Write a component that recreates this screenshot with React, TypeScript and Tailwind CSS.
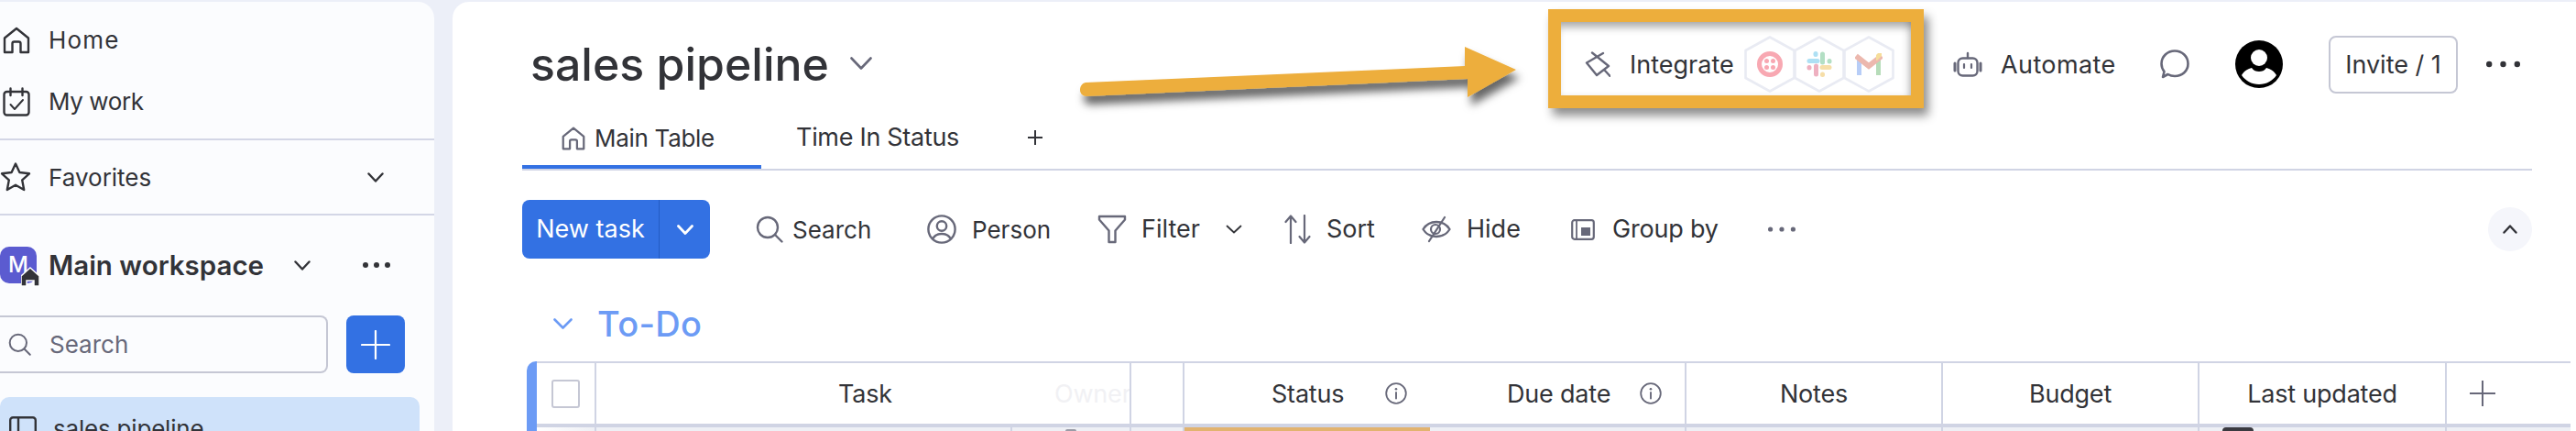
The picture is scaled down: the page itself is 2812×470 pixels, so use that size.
import React from "react";

const S = "#676879";
const D = "#323338";

function Dots({ c = D, r = 3.2, w = 37 }: { c?: string; r?: number; w?: number }) {
  return (
    <svg width={w} height="10" viewBox={`0 0 ${w} 10`} className="block">
      <circle cx={r} cy="5" r={r} fill={c} />
      <circle cx={w / 2} cy="5" r={r} fill={c} />
      <circle cx={w - r} cy="5" r={r} fill={c} />
    </svg>
  );
}

function Chev({ w = 22, h = 12, c = D, sw = 2.4, up = false }: { w?: number; h?: number; c?: string; sw?: number; up?: boolean }) {
  return (
    <svg width={w} height={h} viewBox={`0 0 ${w} ${h}`} className="block" fill="none">
      <path d={up ? `M1.5 ${h - 1.5}L${w / 2} 1.5L${w - 1.5} ${h - 1.5}` : `M1.5 1.5L${w / 2} ${h - 1.5}L${w - 1.5} 1.5`} stroke={c} strokeWidth={sw} strokeLinecap="round" strokeLinejoin="round" />
    </svg>
  );
}

function HomeIcon({ s = 30, c = D, sw = 2.4 }: { s?: number; c?: string; sw?: number }) {
  return (
    <svg width={s} height={s} viewBox="0 0 30 30" fill="none" className="block shrink-0">
      <path d="M2 12.5L15 2L28 12.5V28H19.5V18.5C19.5 17.4 18.6 16.5 17.5 16.5H12.5C11.4 16.5 10.5 17.4 10.5 18.5V28H2V12.5Z" stroke={c} strokeWidth={sw} strokeLinejoin="round" />
    </svg>
  );
}

function SearchIcon({ s = 30, c = S, sw = 2.4 }: { s?: number; c?: string; sw?: number }) {
  return (
    <svg width={s} height={s} viewBox="0 0 30 30" fill="none" className="block">
      <circle cx="13" cy="13" r="11" stroke={c} strokeWidth={sw} />
      <path d="M21 21L28.5 28.5" stroke={c} strokeWidth={sw} strokeLinecap="round" />
    </svg>
  );
}

function InfoIcon() {
  return (
    <svg width="24" height="24" viewBox="0 0 24 24" fill="none" className="block shrink-0">
      <circle cx="12" cy="12" r="10.8" stroke={S} strokeWidth="1.8" />
      <circle cx="12" cy="7.2" r="1.3" fill={S} />
      <path d="M12 11V17.5" stroke={S} strokeWidth="1.9" strokeLinecap="round" />
    </svg>
  );
}

function Hex({ children }: { children: React.ReactNode }) {
  return (
    <div className="relative flex h-[62px] w-[54px] shrink-0 items-center justify-center">
      <svg width="56" height="62" viewBox="0 0 56 62" fill="none" className="absolute left-[-1px] top-0">
        <path d="M28 1.5L54.5 16V46L28 60.5L1.5 46V16L28 1.5Z" stroke="#e9ebf3" strokeWidth="2.6" strokeLinejoin="round" />
      </svg>
      <div className="relative">{children}</div>
    </div>
  );
}

export default function App() {
  const font = "font-['Inter','Liberation_Sans',sans-serif]";
  return (
    <div className={`flex h-[470px] w-[2812px] gap-[20px] overflow-hidden bg-[#eceff8] pt-[2px] text-[#323338] ${font}`}>
      {/* Sidebar */}
      <aside className="flex h-[468px] w-[474px] shrink-0 flex-col overflow-hidden rounded-tr-[18px] bg-[#fbfcfe] pt-[8px]">
        <div className="flex h-[67px] shrink-0 items-center pl-[3px]">
          <HomeIcon />
          <span className="ml-[20px] text-[26px] tracking-[1.2px]">Home</span>
        </div>
        <div className="flex h-[67px] shrink-0 items-center pl-[3px]">
          <svg width="30" height="32" viewBox="0 0 30 32" fill="none" className="block">
            <rect x="1.5" y="5" width="27" height="25.5" rx="3" stroke={D} strokeWidth="2.4" />
            <path d="M8.5 1.5V9M21.5 1.5V9" stroke={D} strokeWidth="2.4" strokeLinecap="round" />
            <path d="M8.5 19L13 24L22 14" stroke={D} strokeWidth="2" strokeLinecap="round" strokeLinejoin="round" />
          </svg>
          <span className="ml-[20px] text-[26px] tracking-[-0.4px]">My work</span>
        </div>
        <div className="mt-[7px] h-[2px] shrink-0 bg-[#d3d6e6]" />
        <div className="flex h-[80px] shrink-0 items-center">
          <svg width="34" height="34" viewBox="0 0 34 34" fill="none" className="block shrink-0">
            <path d="M17 2.5L21.4 12L32 13.3L24.2 20.4L26.2 31L17 25.8L7.8 31L9.8 20.4L2 13.3L12.6 12L17 2.5Z" stroke={D} strokeWidth="2.4" strokeLinejoin="round" />
          </svg>
          <span className="ml-[19px] text-[26px]">Favorites</span>
          <div className="ml-auto mr-[55px]"><Chev w={18} h={11} /></div>
        </div>
        <div className="h-[2px] shrink-0 bg-[#d3d6e6]" />
        <div className="mt-[31px] flex h-[46px] shrink-0 items-center">
          <div className="relative h-[40px] w-[40px] shrink-0">
            <div className="flex h-[40px] w-[40px] items-center justify-center rounded-[10px] bg-[#5b5bd0] text-[24px] font-medium text-white">M</div>
            <svg width="20" height="22" viewBox="0 0 20 22" className="absolute left-[23px] top-[22px]">
              <path d="M10 1L20 10V21H14V15H6V21H0V10L10 1Z" fill={D} stroke="#fff" strokeWidth="1.5" />
            </svg>
          </div>
          <span className="ml-[13px] whitespace-nowrap text-[29.5px] font-semibold">Main workspace</span>
          <div className="ml-[33px] shrink-0"><Chev w={18} h={11} /></div>
          <div className="ml-[57px] shrink-0"><Dots w={30} r={3} /></div>
        </div>
        <div className="mt-[32px] flex h-[63px] shrink-0">
          <div className="flex w-[358px] items-center rounded-r-[8px] border-y-2 border-r-2 border-[#c5c7d4] pl-[9px]">
            <SearchIcon s={25} />
            <span className="ml-[20px] text-[26px] text-[#676879]">Search</span>
          </div>
          <div className="ml-[20px] flex h-[63px] w-[64px] items-center justify-center rounded-[8px] bg-[#3371e3]">
            <svg width="32" height="32" viewBox="0 0 32 32"><path d="M16 1V31M1 16H31" stroke="#fff" strokeWidth="2.2" strokeLinecap="round" /></svg>
          </div>
        </div>
        <div className="mt-[26px] flex h-[60px] w-[458px] shrink-0 items-start rounded-[10px] bg-[#cfe2fa] pl-[10px] pt-[21px]">
          <svg width="30" height="30" viewBox="0 0 30 30" fill="none" className="block shrink-0">
            <rect x="1.2" y="1.2" width="27.6" height="27.6" rx="3" stroke={D} strokeWidth="2.4" />
            <path d="M10 1V29" stroke={D} strokeWidth="2.4" />
          </svg>
          <span className="ml-[18px] mt-[-1px] text-[26px] leading-[30px] tracking-[-0.2px]">sales pipeline</span>
        </div>
      </aside>

      {/* Main */}
      <main className="relative flex h-[468px] flex-1 flex-col rounded-tl-[18px] bg-white">
        <header className="flex h-[136px] shrink-0 items-center pl-[86px]">
          <div className="flex w-[1150px] shrink-0 items-center">
            <h1 className="ml-[-1px] text-[50px] font-medium leading-none">sales pipeline</h1>
            <div className="ml-[23px] mt-[-2px]"><Chev w={24} h={14} c={S} sw={2.6} /></div>
          </div>
          <svg width="28" height="28" viewBox="0 0 28 28" fill="none" className="block shrink-0">
            <path d="M8 1.5L26 16L13 26L2 12.5L20 2M22 21L27.5 27" stroke={S} strokeWidth="2.4" strokeLinecap="round" strokeLinejoin="round" />
          </svg>
          <span className="ml-[21px] mt-[2px] w-[126px] shrink-0 text-[27px]">Integrate</span>
          <Hex>
            <svg width="28" height="28" viewBox="0 0 28 28">
              <circle cx="14" cy="14" r="11.5" fill="none" stroke="#f8a8b2" strokeWidth="5" />
              <circle cx="10.5" cy="10.5" r="2.5" fill="#f8a8b2" />
              <circle cx="17.5" cy="10.5" r="2.5" fill="#f8a8b2" />
              <circle cx="10.5" cy="17.5" r="2.5" fill="#f8a8b2" />
              <circle cx="17.5" cy="17.5" r="2.5" fill="#f8a8b2" />
            </svg>
          </Hex>
          <Hex>
            <svg width="28" height="28" viewBox="0 0 28 28" fill="none" strokeWidth="5" strokeLinecap="round">
              <path d="M3 10.5H12" stroke="#aee0f4" />
              <path d="M10 2.5V3.5" stroke="#aee0f4" />
              <path d="M17.5 3V12" stroke="#b3dfc4" />
              <path d="M25 10.5V11" stroke="#b3dfc4" />
              <path d="M17 17.5H25" stroke="#f6dea8" />
              <path d="M17.5 25V25.5" stroke="#f6dea8" />
              <path d="M10.5 16V25" stroke="#eeb0c0" />
              <path d="M3 17.5V18" stroke="#eeb0c0" />
            </svg>
          </Hex>
          <Hex>
            <svg width="30" height="26" viewBox="0 0 30 26" fill="none">
              <path d="M2 4V25H7V8L2 4Z" fill="#b7cdf7" />
              <path d="M23 8V25H28V4L23 8Z" fill="#b6dcb9" />
              <path d="M1 4L15 15L29 4" stroke="#ecb8ae" strokeWidth="6" />
              <path d="M24 9L29 4V1H25L23 3V9Z" fill="#f6dd9a" />
            </svg>
          </Hex>
          <svg width="32" height="28" viewBox="0 0 32 28" fill="none" className="ml-[65px] block shrink-0">
            <rect x="5.5" y="7.5" width="21" height="19" rx="5" stroke={S} strokeWidth="2.4" />
            <path d="M16 2V7" stroke={S} strokeWidth="2.4" strokeLinecap="round" />
            <path d="M12 14V18M20 14V18" stroke={S} strokeWidth="2.2" strokeLinecap="round" />
            <path d="M2 13V21M30 13V21" stroke={S} strokeWidth="3" strokeLinecap="round" />
          </svg>
          <span className="ml-[20px] mt-[2px] w-[174px] shrink-0 text-[27px] tracking-[0.4px]">Automate</span>
          <svg width="32" height="32" viewBox="0 0 32 32" fill="none" className="block shrink-0">
            <path d="M3 30L4.5 24C2.5 21.5 1.5 18.5 1.5 15.5C1.5 7.5 8 1.5 16 1.5C24 1.5 30.5 7.5 30.5 15.5C30.5 23.5 24 29 16 29C13 29 10.5 28.2 8.5 27L3 30Z" stroke={S} strokeWidth="2.6" strokeLinejoin="round" />
          </svg>
          <svg width="52" height="52" viewBox="0 0 52 52" className="ml-[50px] block shrink-0">
            <circle cx="26" cy="26" r="26" fill="#000" />
            <circle cx="26" cy="19" r="9" fill="#fff" />
            <path d="M7 38C10 33 14 31 18 30C20 33 23 34 26 34C29 34 32 33 34 30C38 31 42 33 45 38C41 44 34 48 26 48C18 48 11 44 7 38Z" fill="#fff" />
          </svg>
          <div className="ml-[50px] flex h-[63px] w-[141px] shrink-0 items-center justify-center rounded-[8px] border-2 border-[#c5c7d4] text-[27px]"><span className="mt-[2px]">Invite / 1</span></div>
          <div className="ml-[31px] shrink-0"><Dots /></div>
        </header>

        {/* Tabs */}
        <div className="ml-[76px] flex h-[48px] w-[2194px] shrink-0 items-start border-b-2 border-[#d0d4e4]">
          <div className="flex h-[46px] w-[261px] shrink-0 items-start border-b-4 border-[#3371e3] pl-[43px]">
            <HomeIcon s={26} c={S} sw={2.6} />
            <span className="ml-[10px] text-[26px] leading-[25px] tracking-[-0.3px]">Main Table</span>
          </div>
          <span className="ml-[38px] text-[27px] leading-[23px] tracking-[-0.3px]">Time In Status</span>
          <svg width="16" height="16" viewBox="0 0 16 16" className="ml-[75px] mt-[4px] block"><path d="M8 0V16M0 8H16" stroke={D} strokeWidth="2" /></svg>
        </div>

        {/* Toolbar */}
        <div className="ml-[76px] mt-[32px] flex h-[64px] w-[2194px] shrink-0 items-center">
          <div className="flex h-[64px] w-[205px] shrink-0 rounded-[8px] bg-[#3371e3] text-white">
            <div className="flex w-[150px] items-center justify-center border-r border-[#235cc4] text-[27px]">New task</div>
            <div className="flex flex-1 items-center justify-center"><Chev w={18} h={11} c="#fff" sw={2.8} /></div>
          </div>
          <div className="ml-[50px]"><SearchIcon /></div>
          <span className="ml-[10px] w-[147px] shrink-0 text-[26px]">Search</span>
          <svg width="32" height="32" viewBox="0 0 32 32" fill="none" className="block shrink-0">
            <circle cx="16" cy="16" r="14.6" stroke={S} strokeWidth="2.4" />
            <circle cx="16" cy="12.5" r="5.2" stroke={S} strokeWidth="2.4" />
            <path d="M6.5 26C8.5 22.5 12 21 16 21C20 21 23.5 22.5 25.5 26" stroke={S} strokeWidth="2.4" />
          </svg>
          <span className="ml-[17px] w-[137px] shrink-0 text-[26px]">Person</span>
          <svg width="32" height="32" viewBox="0 0 32 32" fill="none" className="block shrink-0">
            <path d="M2 2H30V5.5L19.5 17.5V30H12.5V17.5L2 5.5V2Z" stroke={S} strokeWidth="2.4" strokeLinejoin="round" />
          </svg>
          <span className="ml-[16px] w-[92px] shrink-0 text-[27px]">Filter</span>
          <Chev w={18} h={10} sw={1.8} />
          <svg width="29" height="32" viewBox="0 0 29 32" fill="none" className="ml-[46px] block shrink-0">
            <path d="M7 31V2M1.5 8L7 1.5L12.5 8" stroke={S} strokeWidth="2.2" strokeLinecap="round" strokeLinejoin="round" />
            <path d="M22 1V30M16.5 24L22 30.5L27.5 24" stroke={S} strokeWidth="2.2" strokeLinecap="round" strokeLinejoin="round" />
          </svg>
          <span className="ml-[17px] w-[104px] shrink-0 text-[27px]">Sort</span>
          <svg width="32" height="32" viewBox="0 0 32 32" fill="none" className="block shrink-0">
            <path d="M1.5 16C5 10.5 10 8 16 8C22 8 27 10.5 30.5 16C27 21.5 22 24 16 24C10 24 5 21.5 1.5 16Z" stroke={S} strokeWidth="2.3" />
            <circle cx="15" cy="16" r="5" stroke={S} strokeWidth="2.2" />
            <path d="M25 3L8 29" stroke={S} strokeWidth="2.2" strokeLinecap="round" />
          </svg>
          <span className="ml-[17px] w-[114px] shrink-0 text-[27px]">Hide</span>
          <svg width="26" height="23" viewBox="0 0 26 23" fill="none" className="block shrink-0">
            <rect x="1.2" y="1.2" width="23.6" height="20.6" rx="2.5" stroke={S} strokeWidth="2.2" />
            <path d="M6 1V22" stroke={S} strokeWidth="1.8" />
            <rect x="11" y="9" width="10" height="9" fill={S} />
          </svg>
          <span className="ml-[19px] w-[170px] shrink-0 text-[27px] tracking-[-0.2px]">Group by</span>
          <Dots c={S} r={2.6} w={30} />
          <div className="ml-auto flex h-[48px] w-[48px] items-center justify-center rounded-full bg-[#f5f6fb]">
            <Chev w={16} h={10} up sw={2.4} />
          </div>
        </div>

        {/* Group title */}
        <div className="ml-[110px] mt-[47px] flex h-[48px] shrink-0 items-center">
          <Chev w={21} h={12} c="#6c9bf5" sw={2.6} />
          <span className="ml-[27px] text-[38px] font-medium leading-none tracking-[0.3px] text-[#6c9bf5]">To-Do</span>
        </div>

        {/* Table */}
        <div className="ml-[81px] mt-[17px] flex w-[2231px] shrink-0">
          <div className="w-[11px] shrink-0 rounded-tl-[10px] bg-[#6c9bf5]" />
          <div className="flex min-w-0 flex-1 flex-col">
            <div className="flex h-[72px] border-y-2 border-b-4 border-[#d0d4e4] text-[27px] tracking-[-0.2px] [&_span]:mt-[2px]">
              <div className="flex w-[65px] items-center justify-center border-r-2 border-[#d0d4e4]">
                <div className="h-[31px] w-[31px] rounded-[3px] border-2 border-[#c5c7d4]" />
              </div>
              <div className="flex w-[584px] items-center border-r-2 border-[#d0d4e4]">
                <span className="ml-[264px]">Task</span>
                <span className="ml-auto w-[82px] overflow-hidden whitespace-nowrap text-[#f1f1f4]">Owner</span>
              </div>
              <div className="w-[58px] border-r-2 border-[#d0d4e4]" />
              <div className="flex w-[548px] items-center border-r-2 border-[#d0d4e4]">
                <span className="ml-[95px] w-[124px]">Status</span>
                <InfoIcon />
                <span className="ml-[109px] w-[145px]">Due date</span>
                <InfoIcon />
              </div>
              <div className="flex w-[280px] items-center justify-center border-r-2 border-[#d0d4e4]"><span>Notes</span></div>
              <div className="flex w-[280px] items-center justify-center border-r-2 border-[#d0d4e4]"><span>Budget</span></div>
              <div className="flex w-[270px] items-center justify-center border-r-2 border-[#d0d4e4]"><span>Last updated</span></div>
              <div className="flex flex-1 items-center pl-[25px]">
                <svg width="28" height="28" viewBox="0 0 28 28"><path d="M14 0V28M0 14H28" stroke={S} strokeWidth="2" /></svg>
              </div>
            </div>
            <div className="flex h-[4px] bg-[#eef0f5]">
              <div className="w-[65px] border-r-2 border-[#d0d4e4] bg-linear-to-r from-white to-[#eef0f5]" />
              <div className="w-[454px] border-r-2 border-[#d0d4e4]" />
              <div className="flex w-[130px] border-r-2 border-[#d0d4e4] pl-[58px]"><div className="mt-[2px] h-[2px] w-[12px] rounded-t-full bg-[#9a9ba6]" /></div>
              <div className="w-[58px] border-r-2 border-[#d0d4e4]" />
              <div className="w-[268px] bg-[#e2b36f]" />
              <div className="w-[280px] border-r-2 border-[#d0d4e4]" />
              <div className="w-[280px] border-r-2 border-[#d0d4e4]" />
              <div className="w-[280px] border-r-2 border-[#d0d4e4]" />
              <div className="flex w-[270px] border-r-2 border-[#d0d4e4] pl-[25px]"><div className="h-[4px] w-[34px] rounded-t-full bg-[#3a3a40]" /></div>
            </div>
          </div>
        </div>

        {/* Annotation: arrow */}
        <svg width="520" height="100" viewBox="0 0 520 100" fill="none" className="absolute left-[677px] top-[38px]">
          <defs>
            <filter id="arrowShadow" x="-5%" y="-20%" width="110%" height="160%">
              <feDropShadow dx="4" dy="9" stdDeviation="5" floodColor="#000" floodOpacity="0.6" />
            </filter>
          </defs>
          <path d="M14 50L428 32V11L484 36L431 66V46L15 65C11 65 8 62 8 58C8 54 10 51 14 50Z" fill="#edae3c" filter="url(#arrowShadow)" />
        </svg>
        {/* Annotation: highlight */}
        <div className="absolute left-[1196px] top-[8px] h-[108px] w-[410px] border-[14px] border-[#edae3c] shadow-[5px_8px_10px_rgba(0,0,0,0.45),inset_0_10px_8px_-4px_rgba(0,0,0,0.3),inset_-6px_0_8px_-4px_rgba(0,0,0,0.25)]" />
      </main>
    </div>
  );
}
